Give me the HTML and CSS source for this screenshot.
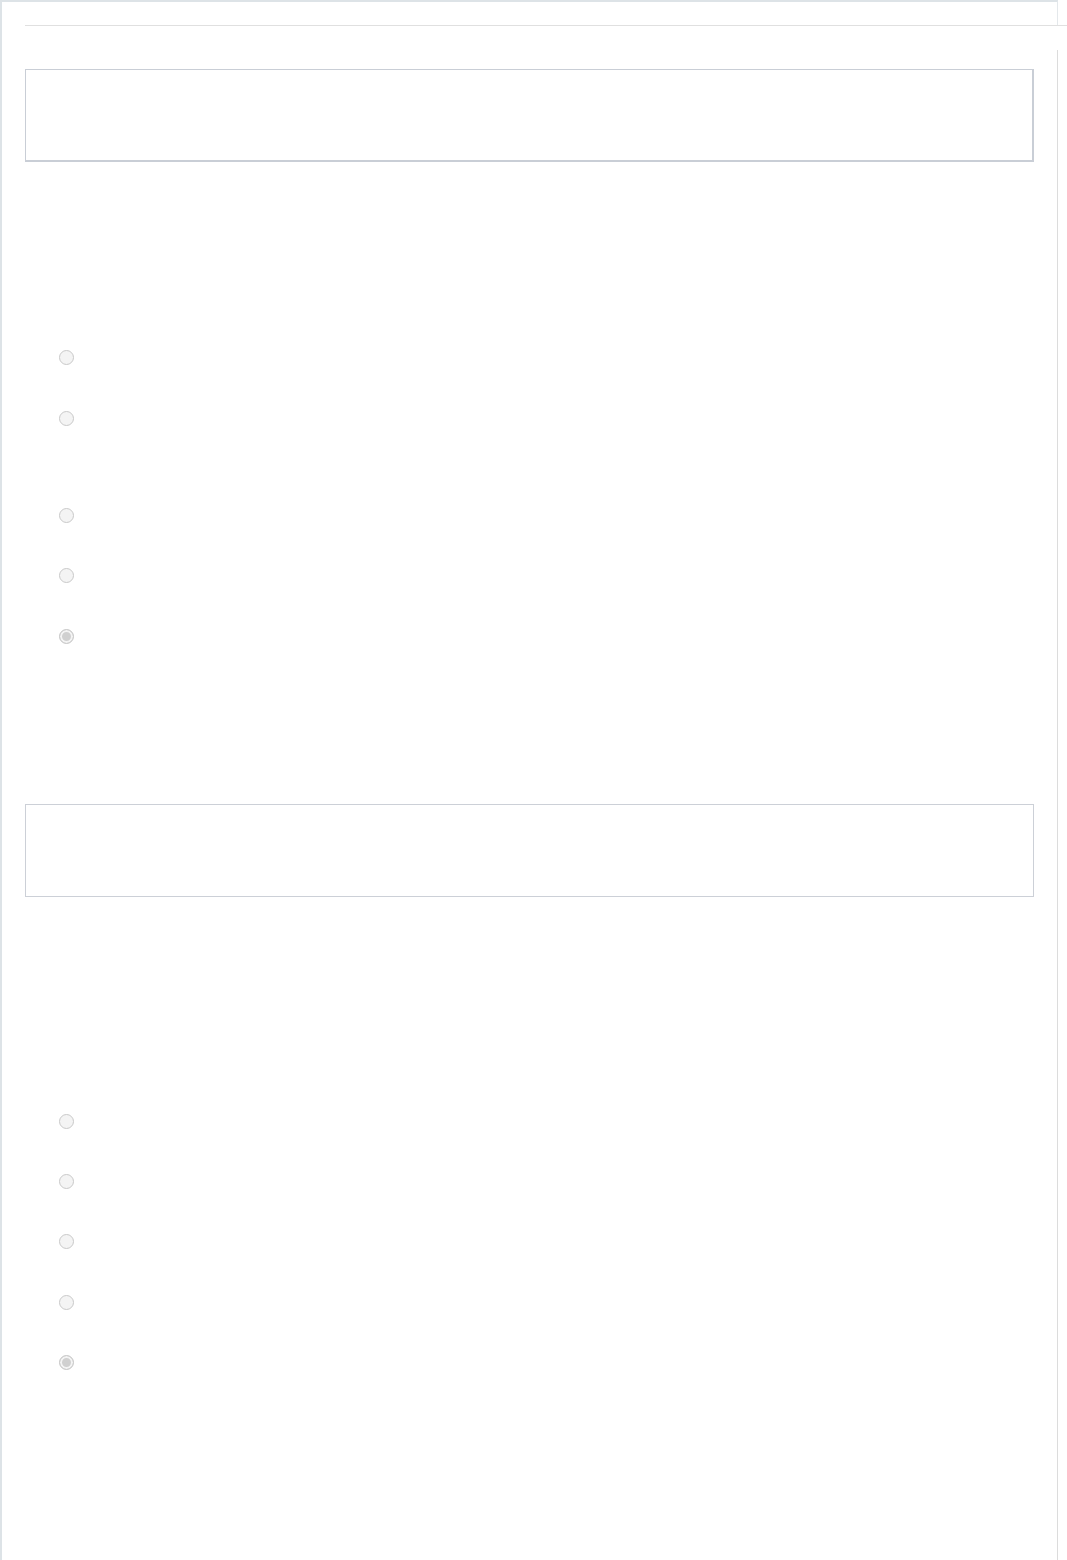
FILE: index.html
```html
<!DOCTYPE html>
<html lang="en">
<head>
    <meta charset="UTF-8">
    <meta name="viewport" content="width=device-width, initial-scale=1.0">
    <title>Survey</title>
    <link rel="stylesheet" href="styles.css">
</head>
<body>

    <div id="page">
        <div class="topbar"></div>
        <div class="rule"></div>

        <div id="content">
            <div class="answer-box first"></div>

            <div class="options group-one">
                <div class="option h61"><input type="radio" name="q1" disabled></div>
                <div class="option h97"><input type="radio" name="q1" disabled></div>
                <div class="option h60"><input type="radio" name="q1" disabled></div>
                <div class="option h61"><input type="radio" name="q1" disabled></div>
                <div class="option h60"><input type="radio" name="q1" checked disabled></div>
            </div>

            <div class="answer-box second"></div>

            <div class="options group-two">
                <div class="option h60"><input type="radio" name="q2" disabled></div>
                <div class="option h60"><input type="radio" name="q2" disabled></div>
                <div class="option h61"><input type="radio" name="q2" disabled></div>
                <div class="option h60"><input type="radio" name="q2" disabled></div>
                <div class="option h60"><input type="radio" name="q2" checked disabled></div>
            </div>
        </div>
    </div>

</body>
</html>
```

FILE: styles.css
```css
body {
    font-family: Arial, "Liberation Sans", sans-serif;
    margin: 0;
    background-color: #fff;
    overflow: hidden;
}

#page {
    width: 1058px;
    min-height: 1560px;
    border-left: 2px solid #dde3e7;
    box-sizing: border-box;
}

.topbar {
    height: 23px;
    border-top: 2px solid #dde3e7;
    border-right: 1px solid #e4e8eb;
}

.rule {
    width: 1042px;
    height: 1px;
    margin-left: 23px;
    background-color: #e0e0e0;
}

#content {
    margin-top: 24px;
    min-height: 1510px;
    padding-left: 23px;
    padding-top: 19px;
    border-right: 1px solid #dcdcdc;
    box-sizing: border-box;
}

.answer-box {
    width: 1009px;
    height: 93px;
    box-sizing: border-box;
    border: 1px solid #ccd0d7;
}

.answer-box.first {
    border-right-width: 2px;
    border-bottom-width: 2px;
    border-color: #c9ced6;
}

.group-one {
    margin-top: 165px;
    margin-bottom: 138px;
}

.group-two {
    margin-top: 194px;
}

.option {
    display: flex;
    align-items: flex-start;
}

.h60 { height: 60px; }
.h61 { height: 61px; }
.h97 { height: 97px; }

input[type="radio"] {
    -webkit-appearance: none;
    appearance: none;
    width: 15px;
    height: 15px;
    margin: 23px 0 0 34px;
    border: 1px solid #c9c9c9;
    border-radius: 50%;
    background-color: #f4f4f4;
    box-sizing: border-box;
}

input[type="radio"]:checked {
    background-color: #d0d0d0;
    box-shadow: inset 0 0 0 2px #f4f4f4;
}
```
